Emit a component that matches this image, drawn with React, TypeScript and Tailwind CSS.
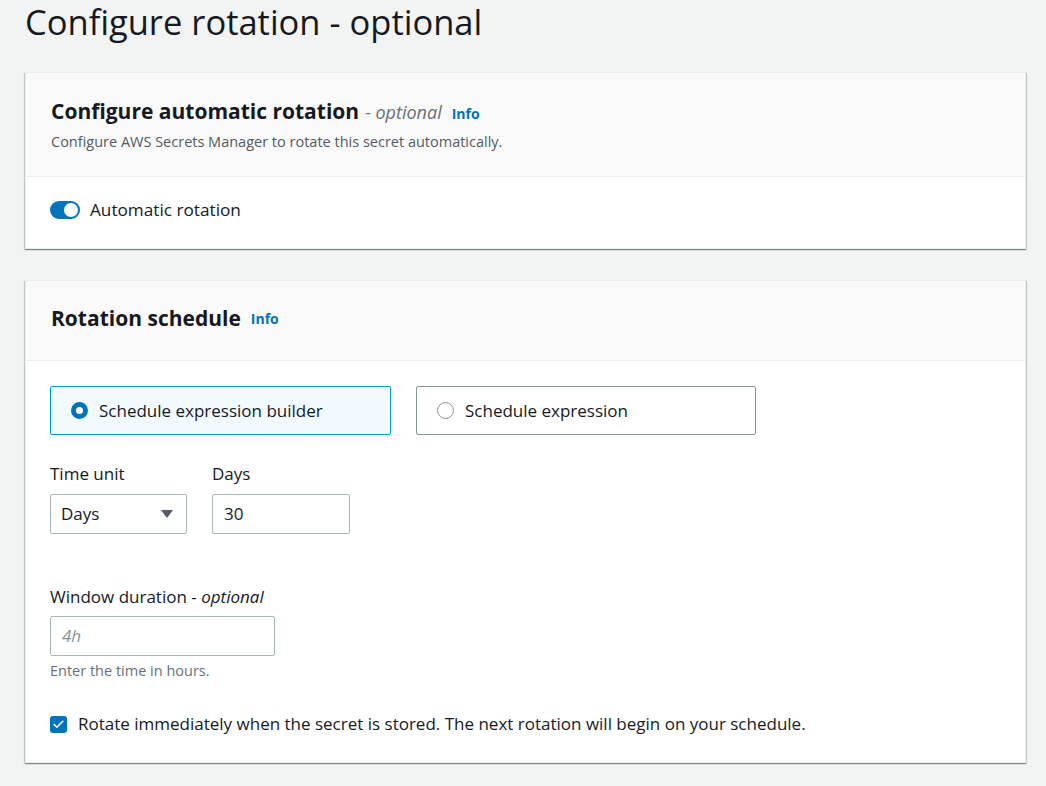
import { Check } from 'lucide-react'

const font = { fontFamily: '"Open Sans", "Noto Sans", sans-serif' }

function Card({ children }: { children: React.ReactNode }) {
  return (
    <div className="bg-white border border-[#eaeded] shadow-[0_1px_1px_0_rgba(0,28,36,0.3),1px_1px_1px_0_rgba(0,28,36,0.15),-1px_1px_1px_0_rgba(0,28,36,0.15)]">
      {children}
    </div>
  )
}

function Info() {
  return <span className="ml-2.5 text-[14px] font-bold text-[#0073bb]">Info</span>
}

export default function App() {
  return (
    <div className="min-h-screen bg-[#f2f3f3] text-[#16191f]" style={font}>
      <div className="pl-[25px] pr-[20px]">
        {/* Page title */}
        <h1 className="pt-[2px] h-[72px] text-[34.5px] leading-[40px] font-normal">
          Configure rotation - optional
        </h1>

        {/* Automatic rotation card */}
        <Card>
          <div className="h-[104px] bg-[#fafafa] border-b border-[#eaeded] px-[25px] pt-[24px]">
            <div className="flex items-baseline">
              <span className="text-[21px] leading-[28px] font-bold">Configure automatic rotation</span>
              <span className="ml-1.5 text-[18px] italic text-[#687078]">- optional</span>
              <Info />
            </div>
            <p className="mt-[6px] text-[14.5px] leading-[20px] text-[#545b64]">
              Configure AWS Secrets Manager to rotate this secret automatically.
            </p>
          </div>
          <div className="h-[71px] px-[24px] pb-[6px] flex items-center">
            <div className="relative w-[30px] h-[18px] rounded-full bg-[#0073bb]">
              <div className="absolute right-[2px] top-[2px] w-[14px] h-[14px] rounded-full bg-white" />
            </div>
            <span className="ml-[10px] text-[17.2px]">Automatic rotation</span>
          </div>
        </Card>

        <div className="h-[31px]" />

        {/* Rotation schedule card */}
        <Card>
          <div className="h-[80px] bg-[#fafafa] border-b border-[#eaeded] px-[25px] pb-[4px] flex items-center">
            <span className="text-[21px] font-bold">Rotation schedule</span>
            <Info />
          </div>
          <div className="px-[24px] pt-[25px] pb-[26px] text-[17px]">
            <div className="flex gap-[25px]">
              <div className="w-[341px] h-[49px] rounded-[2px] border border-[#00a1c9] bg-[#f1faff] flex items-center px-[20px]">
                <span className="w-[17px] h-[17px] rounded-full border-[5px] border-[#0073bb] bg-white" />
                <span className="ml-[11px]">Schedule expression builder</span>
              </div>
              <div className="w-[340px] h-[49px] rounded-[2px] border border-[#879596] bg-white flex items-center px-[20px]">
                <span className="w-[17px] h-[17px] rounded-full border border-[#879596] bg-white" />
                <span className="ml-[11px]">Schedule expression</span>
              </div>
            </div>

            <div className="mt-[26px] flex gap-[25px]">
              <div>
                <div className="leading-[26px]">Time unit</div>
                <div className="mt-[7px] w-[137px] h-[40px] rounded-[2px] border border-[#aab7b8] flex items-center justify-between pl-[10px] pr-[12px]">
                  <span>Days</span>
                  <svg width="14" height="10" viewBox="0 0 14 10">
                    <path d="M1 1h12L7 9z" fill="#545b64" />
                  </svg>
                </div>
              </div>
              <div>
                <div className="leading-[26px]">Days</div>
                <div className="mt-[7px] w-[138px] h-[40px] rounded-[2px] border border-[#aab7b8] flex items-center px-[11px]">
                  <span>30</span>
                </div>
              </div>
            </div>

            <div className="mt-[50px] leading-[26px]">
              Window duration - <span className="italic">optional</span>
            </div>
            <div className="mt-[6px] w-[225px] h-[40px] rounded-[2px] border border-[#aab7b8] flex items-center px-[11px]">
              <span className="italic text-[#879596]">4h</span>
            </div>
            <div className="mt-[5px] text-[14.5px] leading-[20px] text-[#687078]">Enter the time in hours.</div>

            <div className="mt-[31px] flex items-center">
              <span className="w-[17px] h-[17px] rounded-[3px] bg-[#0073bb] flex items-center justify-center">
                <Check className="w-[13px] h-[13px] text-white" strokeWidth={3} />
              </span>
              <span className="ml-[11px] leading-[24px]">
                Rotate immediately when the secret is stored. The next rotation will begin on your schedule.
              </span>
            </div>
          </div>
        </Card>
        <div className="h-[40px]" />
      </div>
    </div>
  )
}
